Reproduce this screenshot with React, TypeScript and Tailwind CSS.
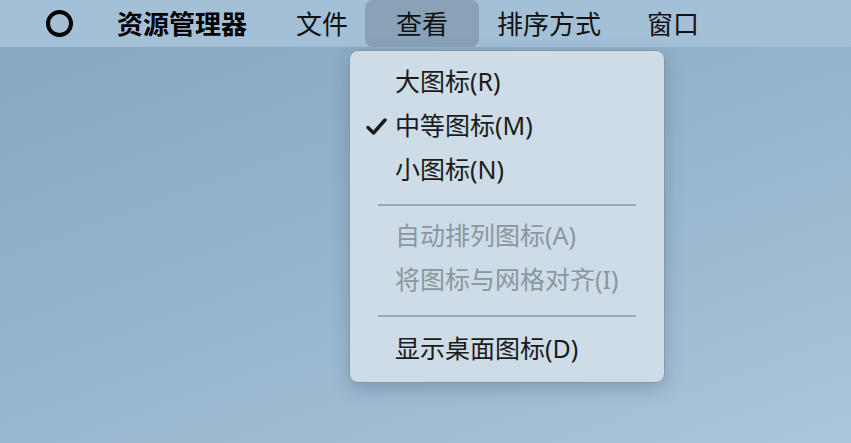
import React from "react";

const font = { fontFamily: '"Noto Sans", "Noto Sans CJK SC", sans-serif' };

function MenuItem({ label, checked, disabled }: { label: string; checked?: boolean; disabled?: boolean }) {
  return (
    <div className={`relative flex h-[44px] items-center pl-[45px] text-[25px] ${disabled ? "text-[#8b979f]" : "text-[#1b1b1b]"}`}>
      {checked && (
        <svg className="absolute left-[16px] top-[12px]" width="21" height="17" viewBox="0 0 21 17">
          <path d="M2 9.5 L7.5 15 L19 2" fill="none" stroke="#1b1b1b" strokeWidth="3.4" strokeLinecap="round" strokeLinejoin="round" />
        </svg>
      )}
      <span className="relative -top-[3px] leading-none">{label}</span>
    </div>
  );
}

export default function App() {
  return (
    <div
      className="relative h-[443px] w-[851px] overflow-hidden bg-[linear-gradient(160deg,#86a7c1_0%,#97b5cd_55%,#abc6da_100%)]"
      style={font}
    >
      <div className="flex h-[47px] items-center bg-[#a4c0d7] text-[26px] text-[#111]">
        <div className="ml-[46px] h-[27px] w-[27px] rounded-full border-[4px] border-black" />
        <div className="ml-[44px] font-bold leading-none text-black">资源管理器</div>
        <div className="ml-[25px] flex h-full items-center">
          <div className="flex h-full items-center px-[24px] leading-none">文件</div>
          <div className="-ml-[7px] -mr-[6px] flex h-full items-center rounded-lg bg-[#89a2b7] px-[31px] leading-none">查看</div>
          <div className="flex h-full items-center pl-[24px] pr-[23px] leading-none">排序方式</div>
          <div className="flex h-full items-center pl-[23px] pr-[24px] leading-none">窗口</div>
        </div>
      </div>

      <div className="absolute left-[349px] top-[50px] h-[333px] w-[316px] rounded-[9px] border border-[#8797a6] bg-[#cddce7] pt-[11px] shadow-[0_6px_18px_rgba(40,60,90,0.25)]">
        <MenuItem label="大图标(R)" />
        <MenuItem label="中等图标(M)" checked />
        <MenuItem label="小图标(N)" />
        <div className="mx-[28px] my-[10px] h-[2px] bg-[#9aaab7]" />
        <MenuItem label="自动排列图标(A)" disabled />
        <MenuItem label="将图标与网格对齐(I)" disabled />
        <div className="mx-[28px] mb-[12px] mt-[11px] h-[2px] bg-[#9aaab7]" />
        <MenuItem label="显示桌面图标(D)" />
      </div>
    </div>
  );
}
